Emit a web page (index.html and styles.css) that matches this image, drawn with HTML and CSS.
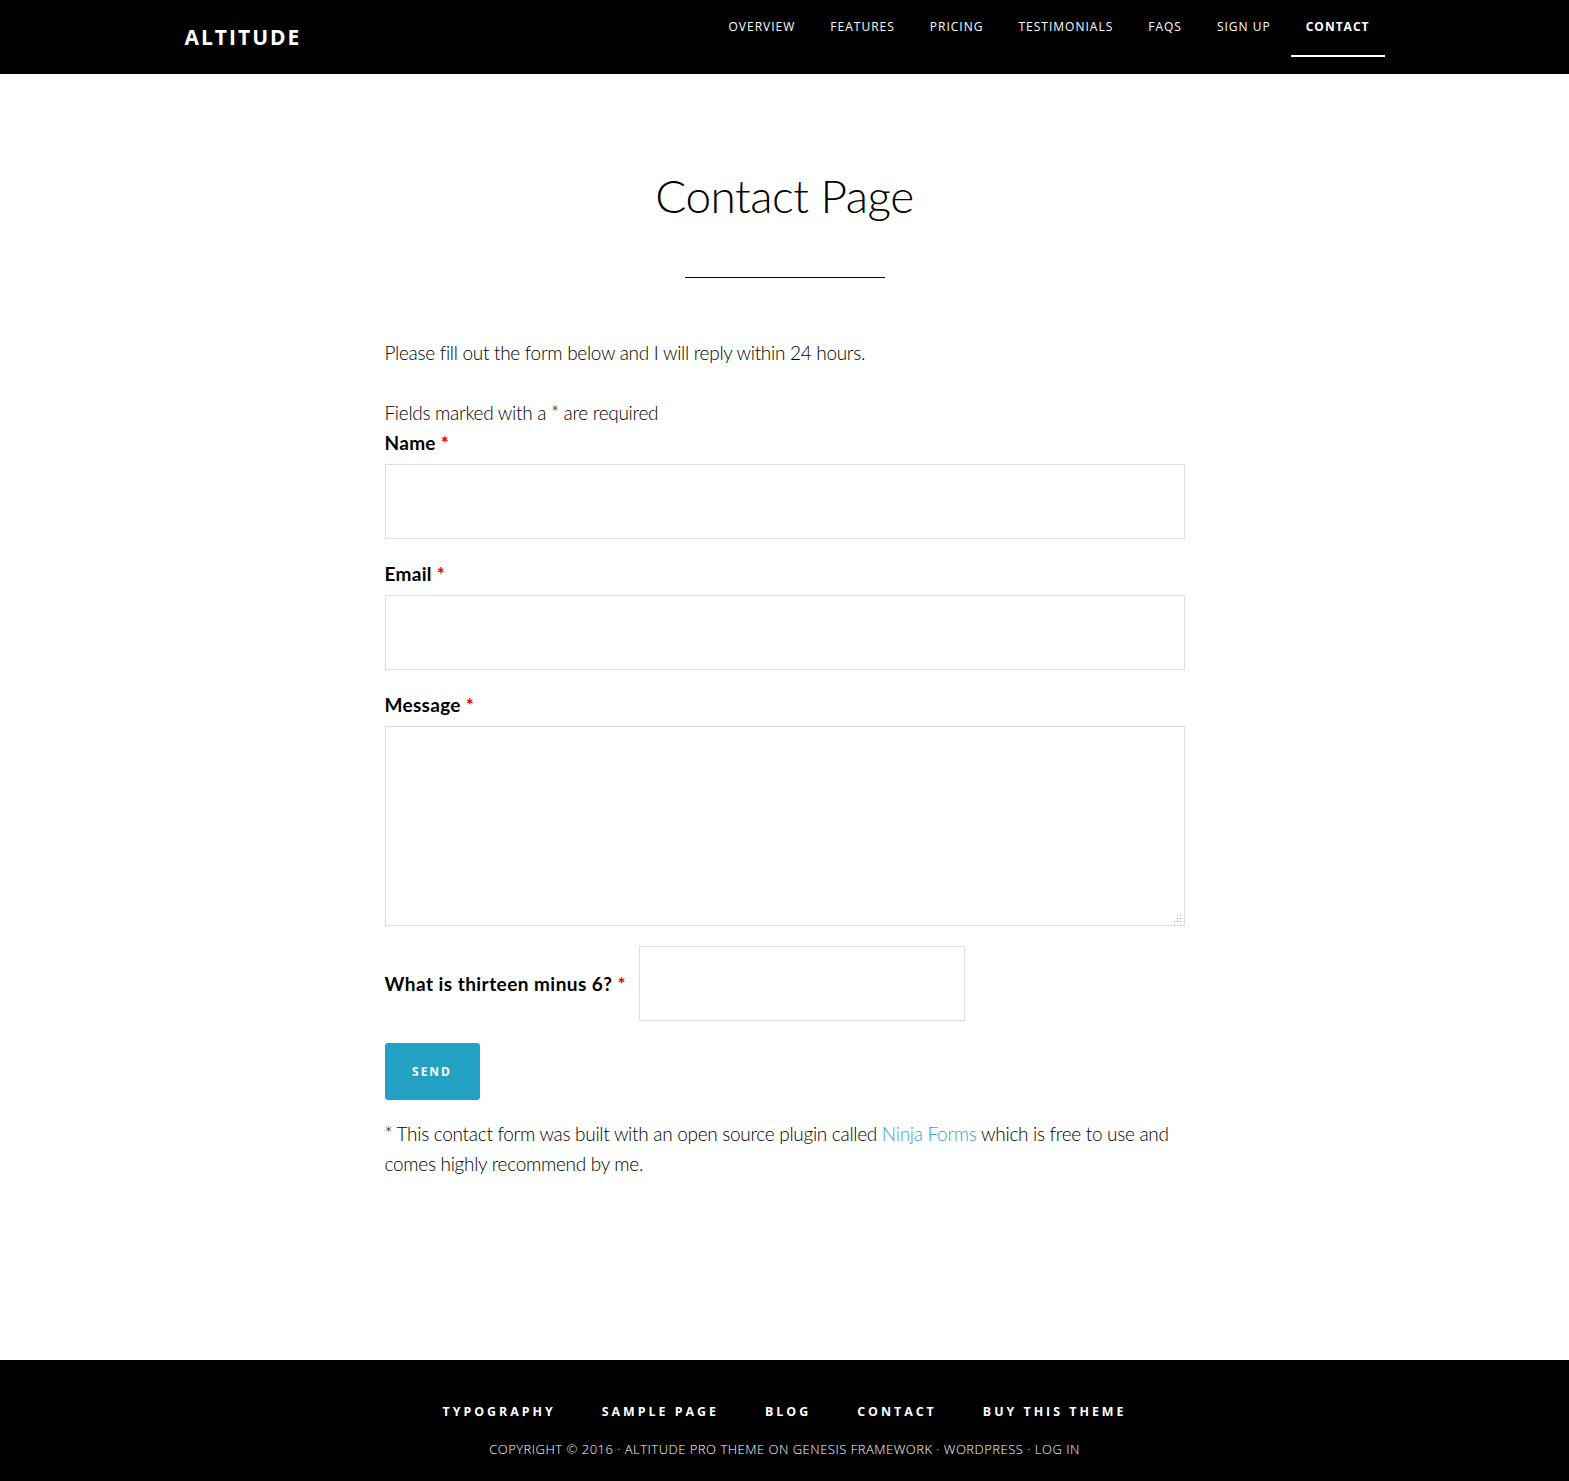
FILE: index.html
```html
<!DOCTYPE html>
<html lang="en">
<head>
    <meta charset="UTF-8">
    <meta name="viewport" content="width=device-width, initial-scale=1.0">
    <title>Contact Page - Altitude</title>
    <link rel="stylesheet" href="styles.css">
</head>
<body>
    <header class="site-header">
        <div class="wrap header-content">
            <a href="#" class="site-title">Altitude</a>
            <nav class="main-nav">
                <a href="#">Overview</a>
                <a href="#">Features</a>
                <a href="#">Pricing</a>
                <a href="#">Testimonials</a>
                <a href="#">FAQs</a>
                <a href="#">Sign Up</a>
                <a href="#" class="current">Contact</a>
            </nav>
        </div>
    </header>

    <main class="content">
        <h1 class="entry-title">Contact Page</h1>
        <div class="title-rule"></div>

        <p class="intro">Please fill out the form below and I will reply within 24 hours.</p>

        <form class="contact-form" action="#" method="post">
            <div class="required-note">Fields marked with a * are required</div>

            <div class="field">
                <label for="name">Name <span class="req">*</span></label>
                <input type="text" id="name" name="name">
            </div>

            <div class="field">
                <label for="email">Email <span class="req">*</span></label>
                <input type="email" id="email" name="email">
            </div>

            <div class="field">
                <label for="message">Message <span class="req">*</span></label>
                <div class="textarea-wrap">
                    <textarea id="message" name="message"></textarea>
                    <svg class="grip" width="8" height="8" viewBox="0 0 8 8">
                        <rect x="6" y="0" width="1" height="1"/>
                        <rect x="3" y="3" width="1" height="1"/>
                        <rect x="6" y="3" width="1" height="1"/>
                        <rect x="0" y="6" width="1" height="1"/>
                        <rect x="3" y="6" width="1" height="1"/>
                        <rect x="6" y="6" width="1" height="1"/>
                    </svg>
                </div>
            </div>

            <div class="field field-inline">
                <label for="spam">What is thirteen minus 6? <span class="req">*</span></label>
                <input type="text" id="spam" name="spam">
            </div>

            <button type="submit" class="btn">Send</button>
        </form>

        <p class="note">* This contact form was built with an open source plugin called <a href="#">Ninja Forms</a> which is free to use and comes highly recommend by me.</p>
    </main>

    <footer class="site-footer">
        <nav class="footer-nav">
            <a href="#">Typography</a>
            <a href="#">Sample Page</a>
            <a href="#">Blog</a>
            <a href="#">Contact</a>
            <a href="#">Buy This Theme</a>
        </nav>
        <p class="copyright">Copyright &copy; 2016 &middot; <a href="#">Altitude Pro Theme</a> on <a href="#">Genesis Framework</a> &middot; <a href="#">WordPress</a> &middot; <a href="#">Log in</a></p>
    </footer>
</body>
</html>
```

FILE: styles.css
```css
* {
    margin: 0;
    padding: 0;
    box-sizing: border-box;
}
body {
    font-family: 'Lato', sans-serif;
    font-weight: 300;
    font-size: 19px;
    letter-spacing: -0.3px;
    background-color: #fff;
    color: #000;
    line-height: 30px;
}
a {
    color: inherit;
    text-decoration: none;
}
.wrap {
    max-width: 1200px;
    margin: 0 auto;
}
.site-header {
    background-color: #000;
    color: #fff;
    height: 74px;
}
.header-content {
    display: flex;
    justify-content: space-between;
    align-items: flex-start;
}
.site-title {
    font-family: 'Open Sans', sans-serif;
    font-weight: 700;
    font-size: 21px;
    letter-spacing: 2px;
    text-transform: uppercase;
    line-height: 74px;
}
.main-nav {
    display: flex;
    gap: 5px;
}
.main-nav a {
    font-family: 'Open Sans', sans-serif;
    font-weight: 400;
    font-size: 12px;
    letter-spacing: 1px;
    text-transform: uppercase;
    padding: 13px 15px 14px;
    line-height: 28px;
    border-bottom: 2px solid transparent;
}
.main-nav a.current {
    font-weight: 700;
    border-bottom-color: #fff;
}
.content {
    width: 800px;
    margin: 0 auto;
    padding: 92px 0 181px;
}
.entry-title {
    font-weight: 300;
    font-size: 46px;
    line-height: 60px;
    text-align: center;
    letter-spacing: -0.5px;
}
.title-rule {
    width: 200px;
    height: 1px;
    background-color: #000;
    margin: 51px auto 60px;
}
.intro {
    margin-bottom: 30px;
}
.field {
    margin-bottom: 20px;
}
.field label {
    display: block;
    font-weight: 700;
    letter-spacing: 0.3px;
    line-height: 30px;
    margin-bottom: 6px;
}
.req {
    color: #e80000;
}
.field input,
.field textarea {
    display: block;
    width: 100%;
    height: 75px;
    border: 1px solid #ddd;
    background-color: #fff;
    font-family: inherit;
    font-size: 18px;
    padding: 15px;
}
.textarea-wrap {
    position: relative;
}
.field textarea {
    height: 200px;
    resize: none;
}
.grip {
    position: absolute;
    right: 3px;
    bottom: 3px;
    fill: #999;
}
.field-inline {
    display: flex;
    align-items: center;
    gap: 13px;
    margin-bottom: 22px;
}
.field-inline label {
    margin-bottom: 0;
    letter-spacing: 0.45px;
}
.field-inline input {
    width: 326px;
}
.btn {
    display: block;
    background-color: #22a1c4;
    color: #fff;
    border: none;
    border-radius: 3px;
    width: 95px;
    height: 57px;
    font-family: 'Open Sans', sans-serif;
    font-weight: 700;
    font-size: 12px;
    letter-spacing: 2px;
    text-transform: uppercase;
    cursor: pointer;
}
.note {
    margin-top: 19px;
}
.note a {
    color: #3a9fc4;
}
.site-footer {
    background-color: #000;
    color: #fff;
    text-align: center;
    padding: 38px 0 18px;
}
.footer-nav {
    display: flex;
    justify-content: center;
    gap: 46px;
}
.footer-nav a {
    font-family: 'Open Sans', sans-serif;
    font-weight: 700;
    font-size: 12.4px;
    letter-spacing: 3px;
    text-transform: uppercase;
    line-height: 28px;
}
.copyright {
    font-family: 'Open Sans', sans-serif;
    font-size: 13px;
    text-transform: uppercase;
    letter-spacing: 0.5px;
    margin-top: 8px;
}
```
